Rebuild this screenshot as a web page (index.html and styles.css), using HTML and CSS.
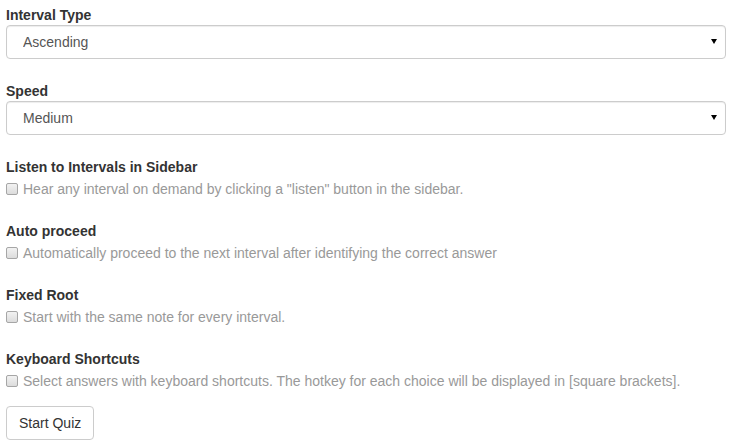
FILE: index.html
```html
<!DOCTYPE html>
<html lang="en">
<head>
  <meta charset="UTF-8">
  <title>Interval Quiz Settings</title>
  <meta name="viewport" content="width=device-width, initial-scale=1.0">
  <link rel="stylesheet" href="styles.css">
</head>
<body>
  <div class="container">
    <div class="form-group">
      <label class="group-label" for="intervalType">Interval Type</label>
      <div class="select-wrap">
        <select id="intervalType" class="form-control">
          <option>Ascending</option>
          <option>Descending</option>
          <option>Harmonic</option>
        </select>
      </div>
    </div>

    <div class="form-group">
      <label class="group-label" for="speed">Speed</label>
      <div class="select-wrap">
        <select id="speed" class="form-control">
          <option>Slow</option>
          <option selected>Medium</option>
          <option>Fast</option>
        </select>
      </div>
    </div>

    <div class="form-group">
      <div class="group-label">Listen to Intervals in Sidebar</div>
      <label class="checkbox"><input type="checkbox">Hear any interval on demand by clicking a "listen" button in the sidebar.</label>
    </div>

    <div class="form-group">
      <div class="group-label">Auto proceed</div>
      <label class="checkbox"><input type="checkbox">Automatically proceed to the next interval after identifying the correct answer</label>
    </div>

    <div class="form-group">
      <div class="group-label">Fixed Root</div>
      <label class="checkbox"><input type="checkbox">Start with the same note for every interval.</label>
    </div>

    <div class="form-group last">
      <div class="group-label">Keyboard Shortcuts</div>
      <label class="checkbox"><input type="checkbox">Select answers with keyboard shortcuts. The hotkey for each choice will be displayed in [square brackets].</label>
    </div>

    <button class="btn">Start Quiz</button>
  </div>
</body>
</html>
```

FILE: styles.css
```css
body { margin: 0; font-family: "Liberation Sans", Arial, sans-serif; font-size: 14px; line-height: 20px; color: #333; background: #fff; }
.container { padding: 5px 3px 0 6px; }
.form-group { margin-bottom: 22px; }
.form-group.last { margin-bottom: 15px; }
.group-label { display: block; font-weight: bold; color: #333; height: 20px; }
.select-wrap { position: relative; }
/* small black triangle like the native menulist arrow */
.select-wrap::after {
  content: "";
  position: absolute;
  right: 9px;
  top: 14px;
  border-left: 3px solid transparent;
  border-right: 3px solid transparent;
  border-top: 5px solid #000;
  pointer-events: none;
}
.form-control {
  display: block;
  width: 100%;
  height: 34px;
  padding: 6px 12px 6px 16px;
  font-family: inherit;
  font-size: 14px;
  color: #555;
  background-color: #fff;
  border: 1px solid #ccc;
  border-radius: 4px;
  box-shadow: inset 0 1px 1px rgba(0,0,0,0.075);
  appearance: none;
  -webkit-appearance: none;
}
.checkbox { display: block; margin-top: 2px; color: #999; height: 20px; white-space: nowrap; }
.checkbox input {
  appearance: none;
  -webkit-appearance: none;
  display: inline-block;
  margin: 0 5px 0 0;
  width: 12px;
  height: 12px;
  vertical-align: -1px;
  border: 1px solid #a6a6a6;
  border-radius: 2px;
  background: linear-gradient(#f2f2f2, #dcdcdc);
}
.btn {
  display: inline-block;
  height: 34px;
  padding: 6px 12px;
  font-family: inherit;
  font-size: 14px;
  line-height: 20px;
  color: #333;
  background: #fff;
  border: 1px solid #ccc;
  border-radius: 4px;
  cursor: pointer;
}
```
